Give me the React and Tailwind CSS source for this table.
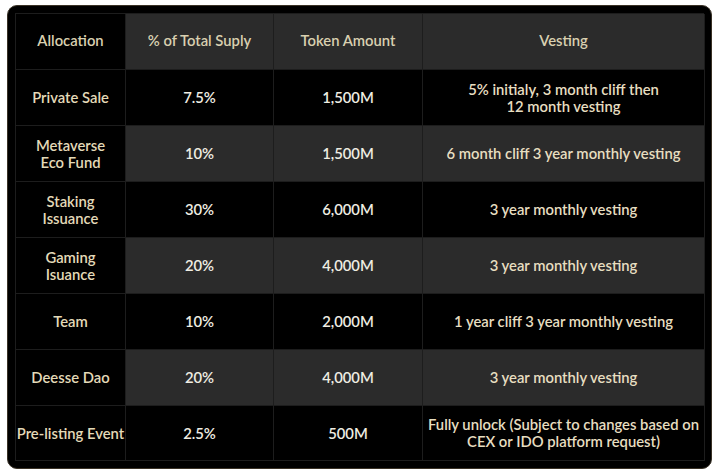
import React from "react";

const rows = [
  { name: ["Private Sale"], pct: "7.5%", amount: "1,500M", vesting: ["5% initialy, 3 month cliff then", "12 month vesting"] },
  { name: ["Metaverse", "Eco Fund"], pct: "10%", amount: "1,500M", vesting: ["6 month cliff 3 year monthly vesting"] },
  { name: ["Staking", "Issuance"], pct: "30%", amount: "6,000M", vesting: ["3 year monthly vesting"] },
  { name: ["Gaming", "Isuance"], pct: "20%", amount: "4,000M", vesting: ["3 year monthly vesting"] },
  { name: ["Team"], pct: "10%", amount: "2,000M", vesting: ["1 year cliff 3 year monthly vesting"] },
  { name: ["Deesse Dao"], pct: "20%", amount: "4,000M", vesting: ["3 year monthly vesting"] },
  { name: ["Pre-listing Event"], pct: "2.5%", amount: "500M", vesting: ["Fully unlock (Subject to changes based on", "CEX or IDO platform request)"] },
];

function Cell({ lines, className = "" }) {
  return (
    <div className={"flex flex-col items-center justify-center border-r border-b border-[#1d1d1d] text-center leading-[17px] " + className}>
      {lines.map((l, i) => (
        <span key={i}>{l}</span>
      ))}
    </div>
  );
}

export default function App() {
  return (
    <div className="min-h-screen bg-white pl-[7px] pt-[5px]" style={{ fontFamily: "Lato, 'Open Sans', sans-serif" }}>
      <div className="w-[705px] rounded-[10px] border border-[#3a3226] bg-black p-[7px]">
        <div className="grid grid-cols-[110px_148px_149px_282px] grid-rows-[56px_56px_56px_56px_56px_56px_56px_55px] border-l border-t border-[#1d1d1d] text-[14.8px] font-semibold">
          <Cell lines={["Allocation"]} className="bg-black pb-[3px] text-[#d9d0b0]" />
          <Cell lines={["% of Total Suply"]} className="bg-[#2b2b2b] pb-[3px] text-[#d9d0b0]" />
          <Cell lines={["Token Amount"]} className="bg-[#2b2b2b] pb-[3px] text-[#d9d0b0]" />
          <Cell lines={["Vesting"]} className="bg-[#2b2b2b] pb-[3px] text-[#d9d0b0]" />
          {rows.map((r, i) => {
            const bg = i % 2 === 1 ? "bg-[#2b2b2b]" : "bg-black";
            return (
              <React.Fragment key={i}>
                <Cell lines={r.name} className="bg-black text-[#e4dab8]" />
                <Cell lines={[r.pct]} className={bg + " text-[#efede2]"} />
                <Cell lines={[r.amount]} className={bg + " text-[#efede2]"} />
                <Cell lines={r.vesting} className={bg + " text-[#e7dec0]"} />
              </React.Fragment>
            );
          })}
        </div>
      </div>
    </div>
  );
}
